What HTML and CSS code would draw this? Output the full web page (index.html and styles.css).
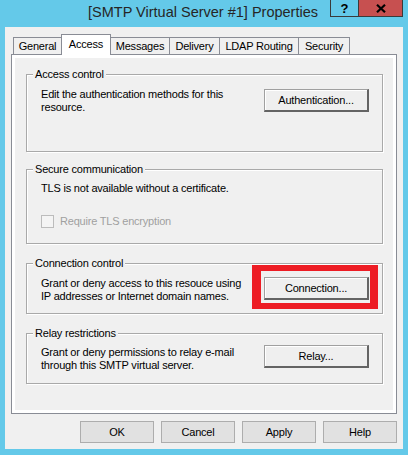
FILE: index.html
```html
<!DOCTYPE html>
<html lang="en">
  <head>
    <title>[SMTP Virtual Server #1] Properties</title>
    <link rel="stylesheet" href="styles.css">
  </head>
  <body>
    <div class="window">
      <div class="titlebar">
        <div class="title">[SMTP Virtual Server #1] Properties</div>
        <div class="caption-buttons">
          <div class="cap-btn cap-help">?</div>
          <div class="cap-btn cap-close">
            <svg width="10" height="9" viewBox="0 0 10 9"><path d="M1 0.8l8 7.4M9 0.8l-8 7.4" stroke="#000" stroke-width="2.2" fill="none"/></svg>
          </div>
        </div>
      </div>

      <div class="client">
        <div class="tabs">
          <div class="tab tab-general">General</div>
          <div class="tab tab-access active">Access</div>
          <div class="tab tab-messages">Messages</div>
          <div class="tab tab-delivery">Delivery</div>
          <div class="tab tab-ldap">LDAP Routing</div>
          <div class="tab tab-security">Security</div>
        </div>

        <div class="panel">
          <fieldset class="group group-access">
            <legend>Access control</legend>
            <div class="row">
              <p class="desc">Edit the authentication methods for this<br>resource.</p>
              <button class="btn btn-first">Authentication...</button>
            </div>
          </fieldset>

          <fieldset class="group group-secure">
            <legend>Secure communication</legend>
            <p class="desc">TLS is not available without a certificate.</p>
            <label class="check disabled">
              <span class="check-box"></span>
              Require TLS encryption
            </label>
          </fieldset>

          <fieldset class="group group-connection">
            <legend>Connection control</legend>
            <div class="row">
              <p class="desc">Grant or deny access to this resouce using<br>IP addresses or Internet domain names.</p>
              <span class="highlight">
                <button class="btn">Connection...</button>
              </span>
            </div>
          </fieldset>

          <fieldset class="group group-relay">
            <legend>Relay restrictions</legend>
            <div class="row">
              <p class="desc">Grant or deny permissions to relay e-mail<br>through this SMTP virtual server.</p>
              <button class="btn btn-relay">Relay...</button>
            </div>
          </fieldset>
        </div>

        <div class="dialog-buttons">
          <button>OK</button>
          <button>Cancel</button>
          <button>Apply</button>
          <button>Help</button>
        </div>
      </div>
    </div>
  </body>
</html>
```

FILE: styles.css
```css
body {
  margin: 0;
  background: #64c9e9;
  font-family: "Liberation Sans", Arial, sans-serif;
  font-size: 11px;
  letter-spacing: -0.2px;
  color: #000;
}

.window {
  height: 455px;
  display: flex;
  flex-direction: column;
}

/* title bar */
.titlebar {
  flex: none;
  height: 27px;
  display: flex;
  align-items: flex-start;
}

.title {
  flex: 1;
  padding-left: 76px;
  text-align: center;
  font-size: 14.5px;
  line-height: 24px;
  letter-spacing: 0;
  color: #262626;
}

.caption-buttons {
  display: flex;
  margin-right: 5px;
}

.cap-btn {
  height: 17px;
  box-sizing: border-box;
  border: 1px solid #3a3a3a;
  border-top: 0;
  display: flex;
  align-items: center;
  justify-content: center;
}

.cap-help {
  width: 28px;
  border-right: 0;
  font-weight: bold;
  font-size: 13px;
  letter-spacing: 0;
}

.cap-close {
  width: 45px;
  background: #c75050;
}

/* dialog body */
.client {
  flex: 1;
  margin: 0 5px 6px;
  background: #f0f0f0;
}

.tabs {
  height: 27px;
  box-sizing: border-box;
  display: flex;
  align-items: flex-end;
  padding-left: 8px;
  position: relative;
  z-index: 1;
}

.tab {
  height: 17px;
  box-sizing: border-box;
  border: 1px solid #898c95;
  border-bottom: 0;
  margin-right: -1px;
  text-align: center;
  line-height: 16px;
  background: #f0f0f0;
}

.tab.active {
  height: 21px;
  margin-bottom: -1px;
  line-height: 18px;
  background: #fff;
  position: relative;
}

.tab-general { width: 49px; }
.tab-access { width: 50px; }
.tab-messages { width: 60px; }
.tab-delivery { width: 51px; }
.tab-ldap { width: 80px; }
.tab-security { width: 52px; }

.panel {
  margin-left: 6px;
  width: 386px;
  height: 360px;
  box-sizing: border-box;
  border: 1px solid #898c95;
  box-shadow: inset 0 0 0 3px #fff;
  padding: 13px 13px 0 14px;
}

.group {
  margin: 0;
  border: 1px solid #a9a9a9;
  box-shadow: 1px 1px 0 #fff, inset 1px 1px 0 #fff;
  padding: 0 13px 0 14px;
}

.group legend {
  margin-left: -8px;
  padding: 0 2px;
  line-height: 13px;
  background: #f0f0f0;
}

.group-access { padding-top: 7px; padding-bottom: 37px; }
.group-secure { margin-top: 11px; padding-top: 6px; padding-bottom: 15px; }
.group-connection { margin-top: 13px; padding-top: 7px; padding-bottom: 10px; }
.group-relay { margin-top: 13px; padding-top: 6px; padding-bottom: 11px; }

.row {
  display: flex;
  justify-content: space-between;
  align-items: flex-start;
}

.desc {
  margin: 0;
  line-height: 13px;
}

.btn {
  width: 105px;
  height: 23px;
  box-sizing: border-box;
  border-style: solid;
  border-width: 1px 2px 2px 1px;
  border-color: #a0a0a0 #646464 #646464 #a0a0a0;
  box-shadow: inset 1px 1px 0 #fff;
  background: #efefef;
  font: inherit;
  letter-spacing: inherit;
  color: #000;
  padding: 0;
}

.btn-first { margin-top: 1px; }
.btn-relay { margin-top: -1px; }

.highlight {
  position: relative;
  display: block;
}

.highlight::after {
  content: "";
  position: absolute;
  top: -12px;
  left: -12px;
  right: -9px;
  bottom: -9px;
  border-style: solid;
  border-color: #ed1c24;
  border-width: 6px 8px 6px 9px;
}

.check {
  display: flex;
  align-items: center;
  gap: 6px;
  margin-top: 20px;
  line-height: 13px;
}

.check.disabled {
  color: #a0a0a0;
}

.check-box {
  width: 13px;
  height: 13px;
  box-sizing: border-box;
  border: 1px solid #bcbcbc;
  background: #f4f4f4;
}

.dialog-buttons {
  display: flex;
  justify-content: flex-end;
  gap: 7px;
  padding: 7px 6px 0 0;
}

.dialog-buttons button {
  width: 74px;
  height: 22px;
  border: 1px solid #adadad;
  background: #e1e1e1;
  font: inherit;
  letter-spacing: inherit;
  color: #000;
  padding: 0;
}
```
